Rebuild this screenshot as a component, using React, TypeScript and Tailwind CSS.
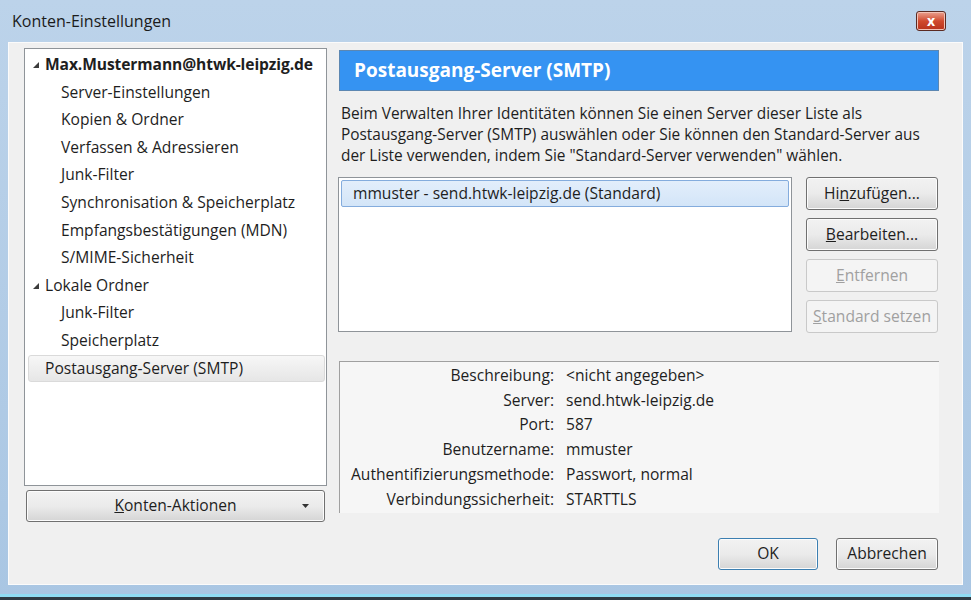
const treeItems = [
  { label: "Max.Mustermann@htwk-leipzig.de", level: 0, bold: true, open: true },
  { label: "Server-Einstellungen", level: 1 },
  { label: "Kopien & Ordner", level: 1 },
  { label: "Verfassen & Adressieren", level: 1 },
  { label: "Junk-Filter", level: 1 },
  { label: "Synchronisation & Speicherplatz", level: 1 },
  { label: "Empfangsbestätigungen (MDN)", level: 1 },
  { label: "S/MIME-Sicherheit", level: 1 },
  { label: "Lokale Ordner", level: 0, open: true },
  { label: "Junk-Filter", level: 1 },
  { label: "Speicherplatz", level: 1 },
  { label: "Postausgang-Server (SMTP)", level: 0, selected: true },
];

const details = [
  ["Beschreibung:", "<nicht angegeben>"],
  ["Server:", "send.htwk-leipzig.de"],
  ["Port:", "587"],
  ["Benutzername:", "mmuster"],
  ["Authentifizierungsmethode:", "Passwort, normal"],
  ["Verbindungssicherheit:", "STARTTLS"],
];

function Expander() {
  return (
    <svg width="8" height="8" viewBox="0 0 8 8" className="mr-[5px] shrink-0">
      <path d="M7 1 L7 7 L1 7 Z" fill="#3c3c3c" />
    </svg>
  );
}

function WinButton({
  children,
  disabled,
  className = "",
}: {
  children: React.ReactNode;
  disabled?: boolean;
  className?: string;
}) {
  return (
    <div
      className={
        "flex items-center justify-center rounded-[3px] border " +
        (disabled
          ? "border-[#c9c9c9] bg-[#f4f4f4] text-[#a0a0a0] "
          : "border-[#707070] bg-gradient-to-b from-[#f2f2f2] via-[#ebebeb] to-[#d5d5d5] text-[#1e1e1e] shadow-[inset_0_0_0_1px_#fcfcfc] ") +
        className
      }
    >
      {children}
    </div>
  );
}

export default function App() {
  return (
    <div
      className="w-[971px] h-[600px] flex flex-col bg-gradient-to-b from-[#bcd3ea] to-[#a9c6e3] overflow-hidden"
      style={{ fontFamily: '"Open Sans", "Noto Sans", sans-serif' }}
    >
      {/* title bar */}
      <div className="h-[42px] shrink-0 flex items-center justify-between pl-[12px] pr-[25px]">
        <span className="text-[16px] text-[#1b1b1b]">Konten-Einstellungen</span>
        <div className="w-[30px] h-[20px] rounded-[3px] border border-[#5b2a22] bg-gradient-to-b from-[#e9a08f] via-[#d0492d] to-[#b8321c] flex items-center justify-center shadow-[inset_0_0_0_1px_#f3c2b6]">
          <span className="text-white font-bold text-[14px] leading-none">x</span>
        </div>
      </div>

      {/* client area */}
      <div className="flex-1 mx-[8px] border border-white/70 bg-[#f0f0f0] flex">
        <div className="flex flex-1 pl-[15px] pt-[5px]">
          {/* left column */}
          <div className="w-[303px] flex flex-col">
            <div className="h-[438px] border border-[#8f9499] bg-white pt-[2px] pl-[3px] pr-[1px] text-[15.6px] text-[#1e1e1e]">
              {treeItems.map((item, i) => (
                <div
                  key={i}
                  className={
                    "h-[27.6px] flex items-center rounded-[3px] whitespace-nowrap " +
                    (item.selected
                      ? "border border-[#dadada] bg-gradient-to-b from-[#f7f7f7] to-[#e6e6e6] "
                      : "border border-transparent ") +
                    (item.level === 1 ? "pl-[32px]" : item.open ? "pl-[3px]" : "pl-[16px]")
                  }
                >
                  {item.level === 0 && item.open && <Expander />}
                  <span className={item.bold ? "font-bold tracking-[-0.1px]" : ""}>{item.label}</span>
                </div>
              ))}
            </div>
            <WinButton className="mt-[4px] ml-[2px] w-[299px] h-[32px] text-[15.6px] relative">
              <span>
                <span className="underline">K</span>onten-Aktionen
              </span>
              <svg width="7" height="4" viewBox="0 0 7 4" className="absolute right-[15px] top-[13px]">
                <path d="M0 0 L7 0 L3.5 4 Z" fill="#333" />
              </svg>
            </WinButton>
          </div>

          {/* right column */}
          <div className="ml-[12px] w-[600px] flex flex-col pt-[2px]">
            <div className="h-[41px] border border-[#5c87b2] bg-[#3593f2] flex items-center pl-[14px]">
              <span className="text-white font-bold text-[19px]">Postausgang-Server (SMTP)</span>
            </div>
            <p className="mt-[12px] pl-[2px] text-[15.4px] leading-[21px] text-[#1e1e1e] whitespace-nowrap">
              Beim Verwalten Ihrer Identitäten können Sie einen Server dieser Liste als
              <br />
              Postausgang-Server (SMTP) auswählen oder Sie können den Standard-Server aus
              <br />
              der Liste verwenden, indem Sie "Standard-Server verwenden" wählen.
            </p>

            <div className="mt-[11px] flex">
              <div className="-ml-[1px] w-[454px] h-[155px] border border-[#8f9499] bg-white p-[2px]">
                <div className="h-[27px] border border-[#84acdd] bg-gradient-to-b from-[#e3eefb] to-[#d3e5f8] rounded-[2px] flex items-center pl-[11px] text-[15.6px] text-[#1e1e1e]">
                  mmuster - send.htwk-leipzig.de (Standard)
                </div>
              </div>
              <div className="ml-[14px] w-[132px] flex flex-col gap-[8px] text-[15.6px]">
                <WinButton className="h-[33px]">
                  <span>
                    Hi<span className="underline">n</span>zufügen...
                  </span>
                </WinButton>
                <WinButton className="h-[33px]">
                  <span>
                    <span className="underline">B</span>earbeiten...
                  </span>
                </WinButton>
                <WinButton disabled className="h-[33px]">
                  <span>
                    <span className="underline">E</span>ntfernen
                  </span>
                </WinButton>
                <WinButton disabled className="h-[33px] whitespace-nowrap">
                  <span>
                    <span className="underline">S</span>tandard setzen
                  </span>
                </WinButton>
              </div>
            </div>

            <div className="mt-[28px] h-[152px] border-t border-l border-[#a0a0a0] bg-[#f6f6f6] pt-[1px]">
              {details.map(([k, v]) => (
                <div key={k} className="h-[24.8px] flex items-center text-[15.6px] text-[#1e1e1e] whitespace-nowrap">
                  <span className="w-[214px] text-right">{k}</span>
                  <span className="ml-[12px]">{v}</span>
                </div>
              ))}
            </div>

            <div className="mt-[25px] flex justify-end gap-[18px] text-[15.6px] pr-[1px]">
              <WinButton className="w-[100px] h-[32px] !border-[#3c7fb1] shadow-[inset_0_0_0_1px_#7fd3f5]">
                OK
              </WinButton>
              <WinButton className="w-[102px] h-[32px]">Abbrechen</WinButton>
            </div>
          </div>
        </div>
      </div>

      {/* bottom frame */}
      <div className="h-[15px] shrink-0 flex flex-col justify-end">
        <div className="h-[3px] bg-[#8fdcf3]" />
        <div className="h-[3px] bg-[#2f3b44]" />
      </div>
    </div>
  );
}
